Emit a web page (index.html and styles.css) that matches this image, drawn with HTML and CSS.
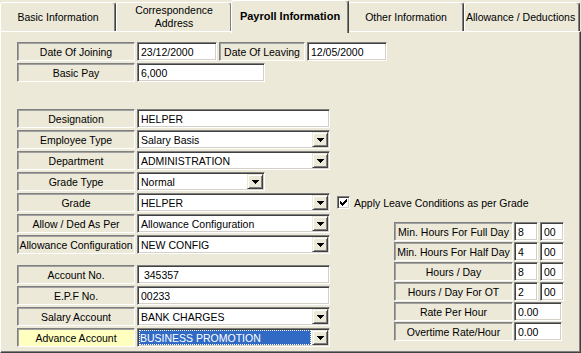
FILE: index.html
```html
<!DOCTYPE html>
<html lang="en">

<head>
    <meta charset="UTF-8">
    <title>Employee - Payroll Information</title>
    <link rel="stylesheet" href="styles.css">
</head>

<body>

    <div class="window">

        <!-- Tabs -->
        <div class="tabs">
            <div class="tab">Basic Information</div>
            <div class="tab">Correspondence<br>Address</div>
            <div class="tab active">Payroll Information</div>
            <div class="tab">Other Information</div>
            <div class="tab clip">Allowance / Deductions</div>
        </div>

        <div class="panel">

            <div class="row">
                <div class="cap">Date Of Joining</div>
                <div class="edit w80">23/12/2000</div>
                <div class="cap w86">Date Of Leaving</div>
                <div class="edit w80">12/05/2000</div>
            </div>
            <div class="row gap-big">
                <div class="cap">Basic Pay</div>
                <div class="edit w128">6,000</div>
            </div>

            <div class="lower">
                <div class="left">
                    <div class="row">
                        <div class="cap">Designation</div>
                        <div class="edit wide">HELPER</div>
                    </div>
                    <div class="row">
                        <div class="cap">Employee Type</div>
                        <div class="edit wide combo"><span class="val">Salary Basis</span><span class="drop"><svg width="7" height="4"><path d="M0 0h7v1H0zM1 1h5v1H1zM2 2h3v1H2zM3 3h1v1H3z"/></svg></span></div>
                    </div>
                    <div class="row">
                        <div class="cap">Department</div>
                        <div class="edit wide combo"><span class="val">ADMINISTRATION</span><span class="drop"><svg width="7" height="4"><path d="M0 0h7v1H0zM1 1h5v1H1zM2 2h3v1H2zM3 3h1v1H3z"/></svg></span></div>
                    </div>
                    <div class="row">
                        <div class="cap">Grade Type</div>
                        <div class="edit w128 combo"><span class="val">Normal</span><span class="drop"><svg width="7" height="4"><path d="M0 0h7v1H0zM1 1h5v1H1zM2 2h3v1H2zM3 3h1v1H3z"/></svg></span></div>
                    </div>
                    <div class="row">
                        <div class="cap">Grade</div>
                        <div class="edit wide combo"><span class="val">HELPER</span><span class="drop"><svg width="7" height="4"><path d="M0 0h7v1H0zM1 1h5v1H1zM2 2h3v1H2zM3 3h1v1H3z"/></svg></span></div>
                    </div>
                    <div class="row">
                        <div class="cap">Allow / Ded As Per</div>
                        <div class="edit wide combo"><span class="val">Allowance Configuration</span><span class="drop"><svg width="7" height="4"><path d="M0 0h7v1H0zM1 1h5v1H1zM2 2h3v1H2zM3 3h1v1H3z"/></svg></span></div>
                    </div>
                    <div class="row gap-mid">
                        <div class="cap">Allowance Configuration</div>
                        <div class="edit wide combo"><span class="val">NEW CONFIG</span><span class="drop"><svg width="7" height="4"><path d="M0 0h7v1H0zM1 1h5v1H1zM2 2h3v1H2zM3 3h1v1H3z"/></svg></span></div>
                    </div>

                    <div class="row">
                        <div class="cap">Account No.</div>
                        <div class="edit wide">&nbsp;345357</div>
                    </div>
                    <div class="row">
                        <div class="cap">E.P.F No.</div>
                        <div class="edit wide">00233</div>
                    </div>
                    <div class="row">
                        <div class="cap">Salary Account</div>
                        <div class="edit wide combo"><span class="val">BANK CHARGES</span><span class="drop"><svg width="7" height="4"><path d="M0 0h7v1H0zM1 1h5v1H1zM2 2h3v1H2zM3 3h1v1H3z"/></svg></span></div>
                    </div>
                    <div class="row">
                        <div class="cap hint">Advance Account</div>
                        <div class="edit wide combo"><span class="val focus">BUSINESS PROMOTION</span><span class="drop"><svg width="7" height="4"><path d="M0 0h7v1H0zM1 1h5v1H1zM2 2h3v1H2zM3 3h1v1H3z"/></svg></span></div>
                    </div>
                </div>

                <div class="right">
                    <div class="check">
                        <span class="box"><svg width="7" height="7"><path d="M6 0h1v3H6zM5 1h1v3H5zM4 2h1v3H4zM3 3h1v3H3zM2 4h1v3H2zM1 3h1v3H1zM0 2h1v3H0z"/></svg></span>
                        <span>Apply Leave Conditions as per Grade</span>
                    </div>

                    <!-- Working hours -->
                    <div class="hours">
                        <div class="hrow">
                            <div class="cap w119">Min. Hours For Full Day</div>
                            <div class="edit w24">8</div>
                            <div class="edit w24">00</div>
                        </div>
                        <div class="hrow">
                            <div class="cap w119">Min. Hours For Half Day</div>
                            <div class="edit w24">4</div>
                            <div class="edit w24">00</div>
                        </div>
                        <div class="hrow">
                            <div class="cap w119">Hours / Day</div>
                            <div class="edit w24">8</div>
                            <div class="edit w24">00</div>
                        </div>
                        <div class="hrow">
                            <div class="cap w119">Hours / Day For OT</div>
                            <div class="edit w24">2</div>
                            <div class="edit w24">00</div>
                        </div>
                        <div class="hrow">
                            <div class="cap w119">Rate Per Hour</div>
                            <div class="edit w48">0.00</div>
                        </div>
                        <div class="hrow">
                            <div class="cap w119">Overtime Rate/Hour</div>
                            <div class="edit w48">0.00</div>
                        </div>
                    </div>
                </div>
            </div>

        </div>
    </div>

</body>

</html>
```

FILE: styles.css
```css
body {
    margin: 0;
    background: #ece9d8;
    font-family: "Liberation Sans", Arial, sans-serif;
    font-size: 10.5px;
    color: #000;
}

.window {
    width: 581px;
    height: 353px;
    display: flex;
    flex-direction: column;
}

/* tabs */
.tabs {
    display: flex;
    align-items: flex-end;
    height: 31px;
}

.tab {
    box-sizing: border-box;
    width: 116px;
    height: 29px;
    border: 1px solid #fff;
    border-right-color: #404040;
    border-bottom: none;
    border-radius: 3px 3px 0 0;
    box-shadow: inset -1px 0 0 #808080;
    background: #ece9d8;
    display: flex;
    align-items: center;
    justify-content: center;
    text-align: center;
    line-height: 13px;
    white-space: nowrap;
    overflow: hidden;
}

.tab.active {
    position: relative;
    z-index: 1;
    width: 118px;
    height: 33px;
    margin: 0 -1px -2px;
    font-weight: bold;
    font-size: 11px;
    padding-bottom: 2px;
}

.tab.clip {
    justify-content: flex-start;
    padding-left: 1px;
}

.panel {
    flex: 1;
    box-sizing: border-box;
    border: 1px solid;
    border-color: #fff #404040 #404040 #fff;
    box-shadow: inset -1px -1px 0 #808080;
    padding: 10px 0 0 16px;
}

/* rows */
.row {
    display: flex;
    gap: 2px;
    height: 19px;
    margin-bottom: 2px;
}

.row.gap-big {
    margin-bottom: 27px;
}

.row.gap-mid {
    margin-bottom: 11px;
}

.cap {
    box-sizing: border-box;
    width: 118px;
    border: 1px solid;
    border-color: #808080 #fff #fff #808080;
    box-shadow: inset 1px 1px 0 #a0a0a0;
    display: flex;
    align-items: center;
    justify-content: center;
    white-space: nowrap;
    overflow: hidden;
}

.cap.hint {
    background: #ffffc0;
}

.edit {
    box-sizing: border-box;
    background: #fff;
    border: 1px solid;
    border-color: #808080 #fff #fff #808080;
    box-shadow: inset 1px 1px 0 #404040, inset -1px -1px 0 #d4d0c8;
    padding: 1px 1px 1px 3px;
    display: flex;
    align-items: center;
    white-space: nowrap;
    overflow: hidden;
}

.w24 { width: 24px; }
.w48 { width: 48px; }
.w80 { width: 80px; }
.w86 { width: 86px; }
.w119 { width: 119px; }
.w128 { width: 128px; }
.wide { width: 193px; }

.combo {
    padding-left: 1px;
}

.combo .val {
    flex: 1;
    padding-left: 2px;
}

.combo .val.focus {
    align-self: stretch;
    display: flex;
    align-items: center;
    margin: 0 1px 0 0;
    padding-left: 1px;
    background: #316ac5;
    color: #fff;
    outline: 1px dotted #fff;
    outline-offset: -1px;
}

.drop {
    box-sizing: border-box;
    width: 16px;
    height: 15px;
    background: #ece9d8;
    border: 1px solid;
    border-color: #ece9d8 #404040 #404040 #ece9d8;
    box-shadow: inset 1px 1px 0 #fff, inset -1px -1px 0 #808080;
    display: flex;
    align-items: center;
    justify-content: center;
}

/* lower part */
.lower {
    display: flex;
    gap: 7px;
}

.right {
    padding-top: 87px;
}

.check {
    display: flex;
    align-items: center;
    gap: 4px;
    height: 13px;
}

.box {
    box-sizing: border-box;
    width: 13px;
    height: 13px;
    background: #fff;
    border: 1px solid;
    border-color: #808080 #fff #fff #808080;
    box-shadow: inset 1px 1px 0 #404040, inset -1px -1px 0 #d4d0c8;
    display: flex;
    align-items: center;
    justify-content: center;
}

.hours {
    margin: 13px 0 0 57px;
}

.hrow {
    display: flex;
    gap: 1px;
    height: 19px;
    margin-bottom: 1px;
}

.hrow .edit + .edit {
    margin-left: 1px;
}
```
